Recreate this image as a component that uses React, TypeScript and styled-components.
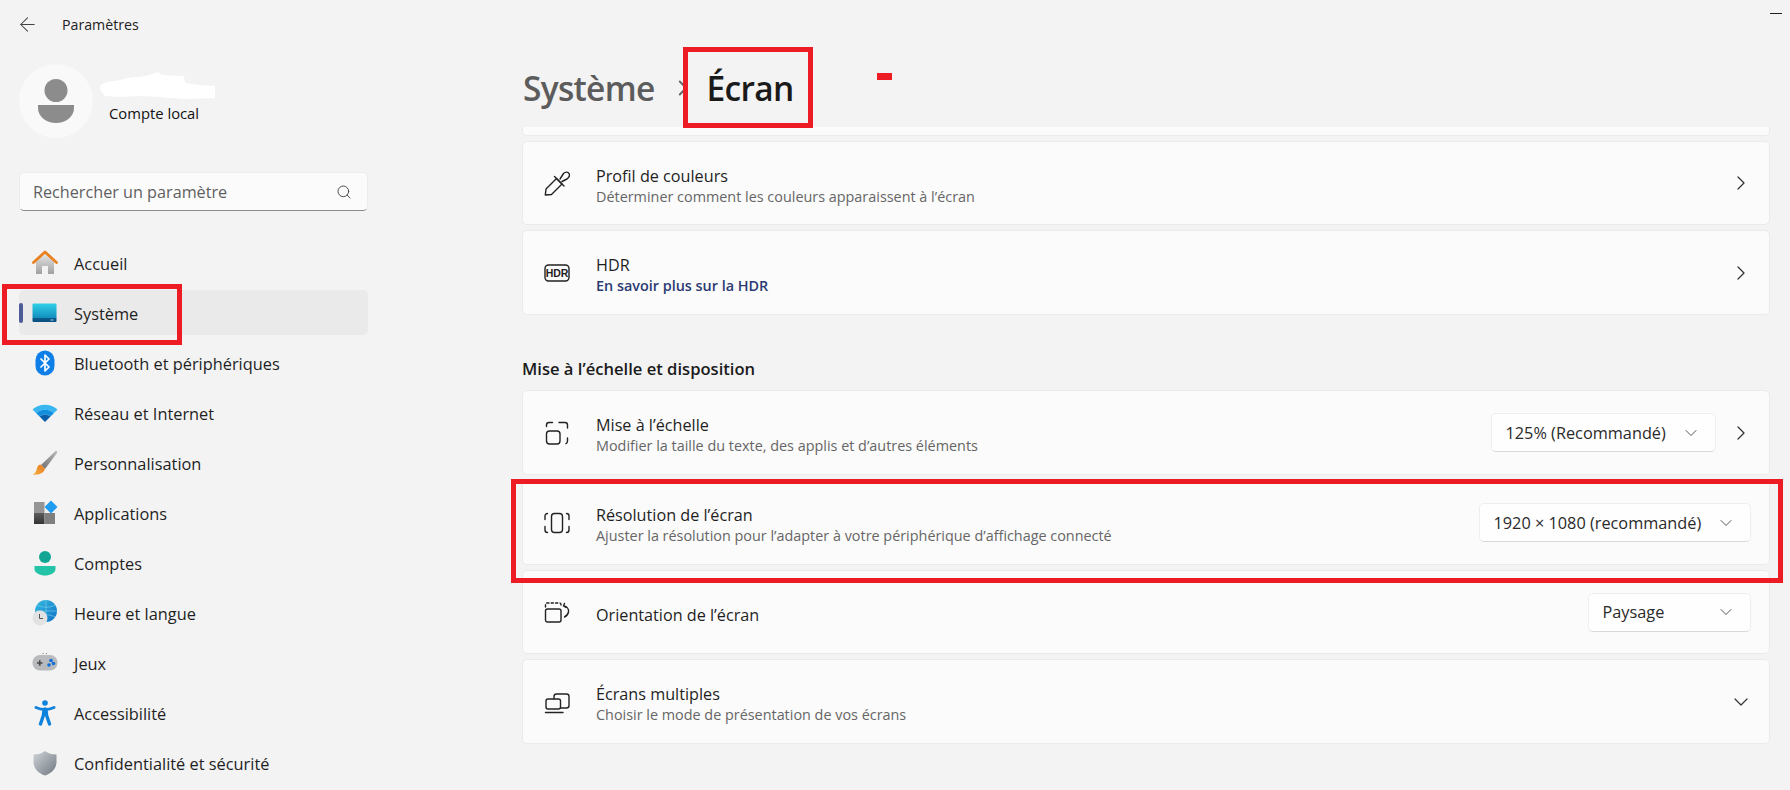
import React from 'react'
import styled, { createGlobalStyle } from 'styled-components'
import { ChevronDown, ChevronRight, ArrowLeft, Search } from 'lucide-react'

const GlobalStyle = createGlobalStyle`
  html, body { margin: 0; padding: 0; height: 100%; background: #f3f3f3; overflow: hidden; }
  body { font-family: "Open Sans", "Noto Sans", "Liberation Sans", sans-serif; color: #1b1b1b; }
  * { box-sizing: border-box; }
`

const Page = styled.div`
  position: relative;
  display: grid;
  grid-template-columns: 400px 1fr;
  width: 1790px;
  height: 790px;
  overflow: hidden;
  background: #f3f3f3;
`

const Sidebar = styled.aside`
  padding: 0 32px 0 19px;
`

const TitleBar = styled.div`
  display: flex;
  align-items: center;
  height: 48px;
  font-size: 14.2px;
  color: #222;
  svg { margin: 0 23px 0 -3px; color: #444; }
`

const Profile = styled.div`
  display: flex;
  margin-top: 16px;
`

const Avatar = styled.div`
  display: flex;
  align-items: center;
  justify-content: center;
  width: 74px;
  height: 74px;
  border-radius: 50%;
  background: #f9f9f9;
`

const ProfileText = styled.div`
  display: flex;
  flex-direction: column;
  margin-left: 7px;
  padding-top: 8px;
`

const AccountType = styled.span`
  padding-left: 9px;
  font-size: 14.8px;
  line-height: 24px;
  color: #111;
`

const SearchBox = styled.div`
  display: flex;
  align-items: center;
  justify-content: space-between;
  height: 39px;
  margin-top: 34px;
  padding: 0 15px 0 13px;
  font-size: 16.2px;
  color: #5f5f5f;
  background: #fbfbfb;
  border: 1px solid #ececec;
  border-bottom: 1px solid #8a8a8a;
  border-radius: 5px;
`

const NavList = styled.nav`
  display: flex;
  flex-direction: column;
  gap: 5px;
  margin-top: 29px;
`

const NavItem = styled.div<{ $active?: boolean }>`
  position: relative;
  display: flex;
  align-items: center;
  height: 45px;
  padding-left: 13px;
  font-size: 16.35px;
  color: #1f1f1f;
  border-radius: 5px;
  background: ${p => (p.$active ? '#eaeaea' : 'transparent')};
`

const NavIcon = styled.span`
  display: flex;
  align-items: center;
  justify-content: center;
  width: 26px;
  height: 26px;
  margin-right: 16px;
`

const NavLabel = styled.span`
  margin-top: 2px;
`

const Indicator = styled.span`
  position: absolute;
  left: 0;
  top: 13px;
  width: 4px;
  height: 20px;
  border-radius: 2px;
  background: #4d5c96;
`

const Main = styled.main`
  padding: 0 20px 0 122px;
`

const Header = styled.header`
  display: flex;
  align-items: center;
  height: 127px;
  padding: 56px 0 8px 1px;
  font-size: 33.5px;
  font-weight: 600;
  letter-spacing: -0.7px;
`

const Crumb = styled.span`
  color: #5c5c5c;
`

const CrumbSeparator = styled.span`
  display: flex;
  margin: 0 11px 0 15px;
  color: #666;
`

const Current = styled.span`
  color: #1a1a1a;
`

const ClippedCard = styled.div`
  height: 9px;
  background: #fbfbfb;
  border: 1px solid #ebebeb;
  border-top: 0;
  border-radius: 0 0 5px 5px;
`

const CardStack = styled.div<{ $first?: boolean }>`
  display: flex;
  flex-direction: column;
  gap: 5px;
  margin-top: ${p => (p.$first ? '5px' : '0')};
`

const Card = styled.div<{ $height: number }>`
  display: flex;
  align-items: center;
  height: ${p => p.$height}px;
  padding: 0 18px 0 21px;
  background: #fbfbfb;
  border: 1px solid #ebebeb;
  border-radius: 5px;
`

const CardIcon = styled.span`
  display: flex;
  align-items: center;
  justify-content: center;
  width: 26px;
  height: 26px;
  margin-right: 26px;
  color: #222;
`

const CardText = styled.div`
  display: flex;
  flex-direction: column;
  flex: 1;
  padding-top: 7px;
`

const CardTitle = styled.span`
  margin: -1px 0 1px;
  font-size: 16.2px;
  line-height: 20px;
  color: #1f1f1f;
`

const CardSub = styled.span<{ $link?: boolean }>`
  font-size: 14.4px;
  line-height: 20px;
  font-weight: ${p => (p.$link ? 600 : 400)};
  color: ${p => (p.$link ? '#2b3a73' : '#666')};
`

const SectionTitle = styled.h2`
  margin: 44px 0 11px;
  font-size: 16.6px;
  line-height: 20px;
  font-weight: 600;
  color: #1b1b1b;
`

const Select = styled.div<{ $width: number }>`
  display: flex;
  align-items: center;
  justify-content: space-between;
  width: ${p => p.$width}px;
  height: 39px;
  padding: 0 14px 0 13.5px;
  font-size: 16.3px;
  color: #2a2a2a;
  background: #fefefe;
  border: 1px solid #eeeeee;
  border-bottom-color: #d9d9d9;
  border-radius: 5px;
  svg { color: #555; }
`

const RowChevron = styled.span`
  display: flex;
  justify-content: center;
  width: 24px;
  margin-right: -2px;
  color: #333;
`

const SelectGap = styled.span`
  width: 13px;
`

const RedFrame = styled.div<{ $x: number; $y: number; $w: number; $h: number }>`
  position: absolute;
  left: ${p => p.$x}px;
  top: ${p => p.$y}px;
  width: ${p => p.$w}px;
  height: ${p => p.$h}px;
  border: 5px solid #ed1c24;
`

const RedDash = styled.div`
  position: absolute;
  left: 877px;
  top: 73px;
  width: 15px;
  height: 7px;
  background: #ed1c24;
`

const MinimizeLine = styled.div`
  position: absolute;
  left: 1770px;
  top: 13px;
  width: 12px;
  height: 1px;
  background: #222;
`

const Blob = () => (
  <svg width="116" height="29" viewBox="0 0 116 29">
    <path
      fill="#ffffff"
      d="M0 14 C6 8 14 10 24 7 C34 4 44 6 52 2 L58 0 L62 3 L84 4 L85 11 L100 13 L115 14 L115 26 L84 27 L60 25 L40 24 L20 25 L5 24 L1 19 Z"
    />
  </svg>
)

const UserIcon = () => (
  <svg width="38" height="44" viewBox="0 0 38 44">
    <circle cx="19" cy="11.5" r="11.5" fill="#8c8c8c" />
    <path d="M1 26 H37 V29 C37 38 28 44 19 44 C10 44 1 38 1 29 Z" fill="#8c8c8c" />
  </svg>
)

const HomeIcon = () => (
  <svg width="26" height="26" viewBox="0 0 26 26">
    <defs>
      <linearGradient id="homeWall" x1="0" y1="0" x2="0" y2="1">
        <stop offset="0" stopColor="#e4e4e4" />
        <stop offset="1" stopColor="#a0a0a0" />
      </linearGradient>
    </defs>
    <path d="M4 12 L13 4 L22 12 V24 H16 V16 H10 V24 H4 Z" fill="url(#homeWall)" />
    <path d="M1.5 12.5 L13 2 L24.5 12.5" fill="none" stroke="#e8801f" strokeWidth="2.8" strokeLinejoin="round" strokeLinecap="round" />
  </svg>
)

const SystemIcon = () => (
  <svg width="26" height="26" viewBox="0 0 26 26">
    <defs>
      <linearGradient id="systemScreen" x1="0" y1="0" x2="0" y2="1">
        <stop offset="0" stopColor="#2fd0e8" />
        <stop offset="0.76" stopColor="#1390c0" />
        <stop offset="0.8" stopColor="#0a5a8a" />
        <stop offset="1" stopColor="#0a4f7f" />
      </linearGradient>
    </defs>
    <rect x="0.5" y="3.5" width="24" height="18.5" rx="1" fill="url(#systemScreen)" />
    <rect x="18.5" y="19.5" width="3" height="1" fill="#9fd7ee" />
  </svg>
)

const BluetoothIcon = () => (
  <svg width="26" height="26" viewBox="0 0 26 26">
    <rect x="3.5" y="0.5" width="19" height="25" rx="9.5" fill="#0f7fe8" />
    <path d="M8.5 8.5 L17 17 L13 21 V5 L17 9 L8.5 17.5" fill="none" stroke="#fff" strokeWidth="1.7" strokeLinejoin="round" />
  </svg>
)

const WifiIcon = () => (
  <svg width="26" height="26" viewBox="0 0 26 26">
    <path d="M0.5 9.5 C7 3 19 3 25.5 9.5 L22 13 C17 8.5 9 8.5 4 13 Z" fill="#37b6f0" />
    <path d="M4 13 C9 8.5 17 8.5 22 13 L18.5 16.5 C15 14 11 14 7.5 16.5 Z" fill="#128fdd" />
    <path d="M7.5 16.5 C11 14 15 14 18.5 16.5 L13 22 Z" fill="#0b5fa8" />
  </svg>
)

const BrushIcon = () => (
  <svg width="26" height="26" viewBox="0 0 26 26">
    <defs>
      <linearGradient id="brushHandle" x1="0" y1="1" x2="1" y2="0">
        <stop offset="0" stopColor="#6f6f6f" />
        <stop offset="1" stopColor="#b9b9b9" />
      </linearGradient>
      <linearGradient id="brushHead" x1="0" y1="1" x2="1" y2="0">
        <stop offset="0" stopColor="#f6b042" />
        <stop offset="1" stopColor="#e9781c" />
      </linearGradient>
    </defs>
    <path d="M9 15 L23 1.5 C25 0.5 25.5 1.5 25 3 L13 19 Z" fill="url(#brushHandle)" />
    <path d="M8.5 14.5 C5.5 15 5 18 4.5 20 C4 22 2.5 23.5 0.5 24.5 C5 25 11 24.5 13 19 Z" fill="url(#brushHead)" />
  </svg>
)

const AppsIcon = () => (
  <svg width="26" height="26" viewBox="0 0 26 26">
    <defs>
      <linearGradient id="appsDark" x1="0" y1="0" x2="0" y2="1">
        <stop offset="0" stopColor="#5c5c5c" />
        <stop offset="1" stopColor="#333333" />
      </linearGradient>
    </defs>
    <rect x="2" y="2" width="10.5" height="11" fill="#959595" />
    <rect x="2" y="13" width="10.5" height="11" fill="url(#appsDark)" />
    <rect x="12.5" y="13" width="10.5" height="11" fill="#7f7f7f" />
    <path d="M19 1.5 L24.5 7 L19 12.5 L13.5 7 Z" fill="#1f9bf0" stroke="#1f9bf0" strokeWidth="1.4" strokeLinejoin="round" />
  </svg>
)

const AccountIcon = () => (
  <svg width="26" height="26" viewBox="0 0 26 26">
    <circle cx="13" cy="7" r="6" fill="#12a594" />
    <path d="M2.5 16 H23.5 V19 C23.5 23 18 25.5 13 25.5 C8 25.5 2.5 23 2.5 19 Z" fill="#22c3a6" />
  </svg>
)

const TimeIcon = () => (
  <svg width="26" height="26" viewBox="0 0 26 26">
    <defs>
      <linearGradient id="globeFill" x1="0" y1="0" x2="1" y2="1">
        <stop offset="0" stopColor="#35bde0" />
        <stop offset="1" stopColor="#0f6fc4" />
      </linearGradient>
    </defs>
    <circle cx="14" cy="11" r="11" fill="url(#globeFill)" />
    <path d="M14 0 V22 M3 11 H25 M5 5 C10 8 18 8 23 5 M5 17 C10 14 18 14 23 17" stroke="#7fd3ee" strokeWidth="0.6" fill="none" />
    <circle cx="8" cy="18" r="7.5" fill="#e2e2e2" />
    <path d="M7.5 14 V18.5 H11" stroke="#555" strokeWidth="1" fill="none" />
  </svg>
)

const GameIcon = () => (
  <svg width="26" height="26" viewBox="0 0 26 26">
    <rect x="0.5" y="5" width="25" height="15.5" rx="7.5" fill="#b8babd" />
    <path d="M5 13 H10.5 M7.75 10.2 V15.8" stroke="#4a4a4a" strokeWidth="1.6" />
    <path d="M10.5 3.6 H11.5 M14 3.6 H15" stroke="#777" strokeWidth="1" />
    <circle cx="19" cy="10.5" r="1.8" fill="#0f6fd6" />
    <circle cx="21.5" cy="13.5" r="1.8" fill="#0f6fd6" />
    <circle cx="17" cy="15" r="1.8" fill="#0f6fd6" />
  </svg>
)

const AccessIcon = () => (
  <svg width="26" height="26" viewBox="0 0 26 26">
    <circle cx="13" cy="3" r="2.8" fill="#0f82dc" />
    <path d="M4 7.5 C7 9 10 9.5 13 9.5 C16 9.5 19 9 22 7.5" stroke="#0f82dc" strokeWidth="3" fill="none" strokeLinecap="round" />
    <path d="M13 9 L13 14 M12 10 L11.5 15 L8.5 24 M14 10 L14.5 15 L17.5 24" stroke="#0f82dc" strokeWidth="3.4" fill="none" strokeLinecap="round" />
  </svg>
)

const ShieldIcon = () => (
  <svg width="26" height="26" viewBox="0 0 26 26">
    <defs>
      <linearGradient id="shieldFill" x1="0" y1="0" x2="1" y2="1">
        <stop offset="0" stopColor="#d0d4d8" />
        <stop offset="1" stopColor="#6f7780" />
      </linearGradient>
    </defs>
    <path d="M13 1 C16 3.5 20 4.5 24.5 4.5 V12 C24.5 19 19 23.5 13 25.5 C7 23.5 1.5 19 1.5 12 V4.5 C6 4.5 10 3.5 13 1 Z" fill="url(#shieldFill)" />
  </svg>
)

const lineProps = { fill: 'none', stroke: 'currentColor', strokeWidth: 1.4, strokeLinecap: 'round', strokeLinejoin: 'round' } as const

const DropperIcon = () => (
  <svg width="26" height="26" viewBox="0 0 26 26" {...lineProps}>
    <path d="M1.3 25 L2 19 L12.5 8.5 L18 14 L7.5 24.5 Z" />
    <path d="M10.5 6.5 L20 16" />
    <path d="M16 9 L19.5 3.5 C21.5 1.5 24.5 1.7 25.3 4 C26 6 25 7.5 23 9 L18 11.5" />
  </svg>
)

const HdrIcon = () => (
  <svg width="26" height="18" viewBox="0 0 26 18">
    <rect x="1" y="1" width="24" height="16" rx="3.5" fill="none" stroke="currentColor" strokeWidth="1.4" />
    <text x="13" y="13" textAnchor="middle" fontSize="10.5" fontWeight="700" fontFamily="Liberation Sans, sans-serif" fill="currentColor">
      HDR
    </text>
  </svg>
)

const ScaleIcon = () => (
  <svg width="26" height="26" viewBox="0 0 26 26" {...lineProps}>
    <rect x="2.5" y="11" width="13.5" height="13" rx="3" />
    <path d="M2.5 6.5 V5 C2.5 3.3 3.3 2.5 5 2.5 H8.5 M15 2.5 H21 C22.7 2.5 23.5 3.3 23.5 5 V8 M23.5 18 V21 C23.5 22.5 23 23.3 22 23.7" />
  </svg>
)

const ResolutionIcon = () => (
  <svg width="26" height="26" viewBox="0 0 26 26" {...lineProps}>
    <rect x="7.5" y="3.5" width="11" height="19" rx="3" />
    <path d="M3.5 3.5 C2 3.5 1 4.5 1 6 V9.5 M22.5 3.5 C24 3.5 25 4.5 25 6 V9.5 M1 16.5 V20 C1 21.5 2 22.5 3.5 22.5 M25 16.5 V20 C25 21.5 24 22.5 22.5 22.5" />
  </svg>
)

const RotateIcon = () => (
  <svg width="26" height="26" viewBox="0 0 26 26" {...lineProps}>
    <rect x="1.5" y="10" width="15.5" height="13" rx="2" />
    <path d="M1.5 8 V5.5 C1.5 4.5 2 4 3 4 H15.5 C16.5 4 17 4.5 17 5.5 V8" strokeDasharray="2.2 2.2" />
    <path d="M20 7 C23 7.5 25 10 24.5 13 C24 15.5 22.5 17 20.5 18 M20.5 4.5 L19.5 7 L22 8.5" />
  </svg>
)

const MultiIcon = () => (
  <svg width="26" height="26" viewBox="0 0 26 26" {...lineProps}>
    <rect x="2" y="10" width="14.5" height="10" rx="2" />
    <path d="M10 10 V7.5 C10 6 11 5 12.5 5 H22.5 C24 5 25 6 25 7.5 V16.5 C25 18 24 19 22.5 19 H16.5" />
    <path d="M1.5 23.5 H19" />
  </svg>
)

const navItems = [
  { label: 'Accueil', icon: <HomeIcon /> },
  { label: 'Système', icon: <SystemIcon />, active: true },
  { label: 'Bluetooth et périphériques', icon: <BluetoothIcon /> },
  { label: 'Réseau et Internet', icon: <WifiIcon /> },
  { label: 'Personnalisation', icon: <BrushIcon /> },
  { label: 'Applications', icon: <AppsIcon /> },
  { label: 'Comptes', icon: <AccountIcon /> },
  { label: 'Heure et langue', icon: <TimeIcon /> },
  { label: 'Jeux', icon: <GameIcon /> },
  { label: 'Accessibilité', icon: <AccessIcon /> },
  { label: 'Confidentialité et sécurité', icon: <ShieldIcon /> },
]

function App() {
  return (
    <Page>
      <GlobalStyle />
      <Sidebar>
        <TitleBar>
          <ArrowLeft size={23} strokeWidth={1.1} />
          Paramètres
        </TitleBar>
        <Profile>
          <Avatar>
            <UserIcon />
          </Avatar>
          <ProfileText>
            <Blob />
            <AccountType>Compte local</AccountType>
          </ProfileText>
        </Profile>
        <SearchBox>
          Rechercher un paramètre
          <Search size={16} strokeWidth={1.4} color="#444" />
        </SearchBox>
        <NavList>
          {navItems.map(item => (
            <NavItem key={item.label} $active={item.active}>
              {item.active && <Indicator />}
              <NavIcon>{item.icon}</NavIcon>
              <NavLabel>{item.label}</NavLabel>
            </NavItem>
          ))}
        </NavList>
      </Sidebar>

      <Main>
        <Header>
          <Crumb>Système</Crumb>
          <CrumbSeparator>
            <ChevronRight size={26} strokeWidth={1.8} />
          </CrumbSeparator>
          <Current>Écran</Current>
        </Header>
        <ClippedCard />
        <CardStack $first>
          <Card $height={84}>
            <CardIcon><DropperIcon /></CardIcon>
            <CardText>
              <CardTitle>Profil de couleurs</CardTitle>
              <CardSub>Déterminer comment les couleurs apparaissent à l’écran</CardSub>
            </CardText>
            <RowChevron><ChevronRight size={24} strokeWidth={1.3} /></RowChevron>
          </Card>
          <Card $height={85}>
            <CardIcon><HdrIcon /></CardIcon>
            <CardText>
              <CardTitle>HDR</CardTitle>
              <CardSub $link>En savoir plus sur la HDR</CardSub>
            </CardText>
            <RowChevron><ChevronRight size={24} strokeWidth={1.3} /></RowChevron>
          </Card>
        </CardStack>

        <SectionTitle>Mise à l’échelle et disposition</SectionTitle>
        <CardStack>
          <Card $height={85}>
            <CardIcon><ScaleIcon /></CardIcon>
            <CardText>
              <CardTitle>Mise à l’échelle</CardTitle>
              <CardSub>Modifier la taille du texte, des applis et d’autres éléments</CardSub>
            </CardText>
            <Select $width={225}>
              125% (Recommandé)
              <ChevronDown size={20} strokeWidth={1.2} />
            </Select>
            <SelectGap />
            <RowChevron><ChevronRight size={24} strokeWidth={1.3} /></RowChevron>
          </Card>
          <Card $height={85}>
            <CardIcon><ResolutionIcon /></CardIcon>
            <CardText>
              <CardTitle>Résolution de l’écran</CardTitle>
              <CardSub>Ajuster la résolution pour l’adapter à votre périphérique d’affichage connecté</CardSub>
            </CardText>
            <Select $width={272}>
              1920 × 1080 (recommandé)
              <ChevronDown size={20} strokeWidth={1.2} />
            </Select>
          </Card>
          <Card $height={84}>
            <CardIcon><RotateIcon /></CardIcon>
            <CardText>
              <CardTitle>Orientation de l’écran</CardTitle>
            </CardText>
            <Select $width={163}>
              Paysage
              <ChevronDown size={20} strokeWidth={1.2} />
            </Select>
          </Card>
          <Card $height={85}>
            <CardIcon><MultiIcon /></CardIcon>
            <CardText>
              <CardTitle>Écrans multiples</CardTitle>
              <CardSub>Choisir le mode de présentation de vos écrans</CardSub>
            </CardText>
            <RowChevron><ChevronDown size={28} strokeWidth={1.2} /></RowChevron>
          </Card>
        </CardStack>
      </Main>

      <RedFrame $x={2} $y={284} $w={180} $h={61} />
      <RedFrame $x={683} $y={47} $w={130} $h={81} />
      <RedFrame $x={511} $y={479} $w={1272} $h={104} />
      <RedDash />
      <MinimizeLine />
    </Page>
  )
}

export default App
